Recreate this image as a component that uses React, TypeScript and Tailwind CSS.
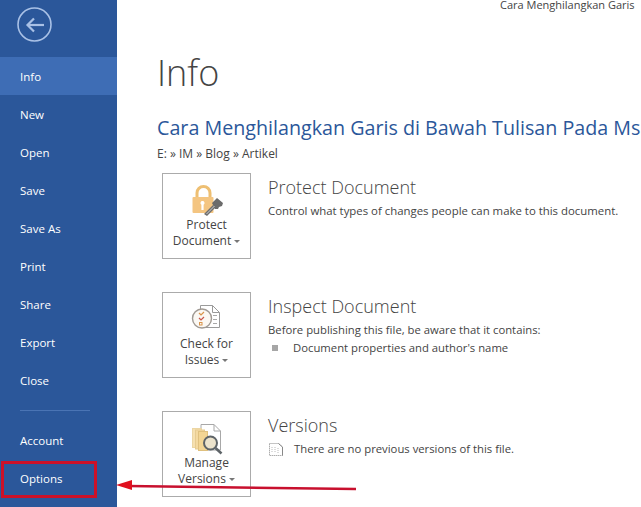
import React from "react";

function Caret() {
  return <span className="inline-block ml-[3px] align-middle w-0 h-0 border-l-[3px] border-r-[3px] border-t-[3px] border-l-transparent border-r-transparent border-t-[#777]" />;
}

function LockIcon() {
  return (
    <svg width="34" height="36" viewBox="0 0 34 36">
      <path d="M7 17v-5a6.5 6.5 0 0 1 13 0v5" fill="none" stroke="#eebf72" strokeWidth="3" />
      <rect x="2.5" y="16" width="21" height="16" rx="1" fill="#f4c581" />
      <path d="M12.5 20a2 2 0 0 1 1.1 3.7V29h-2.2v-5.3a2 2 0 0 1 1.1-3.7z" fill="#fff" />
      <path d="M14 33l9-9 2.5 2.5-8.5 8.5z" fill="#6f6f6f" />
      <path d="M22 22l5-5 6 5-1 3-3 1-1 2-3 0z" fill="#6b6b6b" />
      <path d="M16.5 33l8-8" stroke="#cfcfcf" strokeWidth="1" />
    </svg>
  );
}

function CheckIcon() {
  return (
    <svg width="34" height="34" viewBox="0 0 34 34" fill="none">
      <path d="M10.5 5.5h12l7 7v15h-19z" fill="#fff" stroke="#9a9a9a" />
      <path d="M22.5 5.5v7h7" stroke="#9a9a9a" />
      <path d="M23 15.5h4M23 19.5h4M23 23.5h4" stroke="#a8a8a8" />
      <circle cx="12" cy="18.5" r="9.5" fill="#fbf8f3" stroke="#a09a94" strokeWidth="1.4" />
      <path d="M9 13l2 2 3-3" stroke="#d9944a" strokeWidth="1.2" />
      <path d="M9 18l2 2 3-3" stroke="#c9574a" strokeWidth="1.2" />
      <rect x="9.5" y="22.5" width="2.5" height="2.5" stroke="#d9944a" />
    </svg>
  );
}

function VersionsIcon() {
  return (
    <svg width="34" height="36" viewBox="0 0 34 36" fill="none">
      <path d="M11 5.5h13l6.5 6.5v19H11z" fill="#fff" stroke="#a8a8a8" />
      <path d="M24 5.5V12h6.5" stroke="#a8a8a8" />
      <rect x="2.5" y="9.5" width="9" height="19" fill="#f6e0b0" stroke="#ecd6a4" />
      <rect x="5.5" y="11" width="9" height="19" fill="#f4d9a0" stroke="#e6cb92" />
      <rect x="8.5" y="12.5" width="9" height="19" fill="#f3d594" stroke="#dfc07e" />
      <circle cx="20.5" cy="24" r="6.5" fill="#ece3cc" stroke="#5e6468" strokeWidth="2" />
      <path d="M25.5 29l6 5.5" stroke="#5e6468" strokeWidth="2.6" />
    </svg>
  );
}

function Section({ icon, l1, l2, title, children }: { icon: React.ReactNode; l1: string; l2: string; title: string; children: React.ReactNode }) {
  return (
    <div className="flex h-[86px]">
      <div className="w-[89px] h-[86px] border border-[#ababab] flex flex-col items-center pt-[7px] text-[12px] leading-[16px] text-[#444]">
        <div className="h-[35px] mb-[1px] flex justify-center">{icon}</div>
        <div>{l1}</div>
        <div>{l2}<Caret /></div>
      </div>
      <div className="ml-[17px] pt-[2px]">
        <div className="text-[18px] leading-[25px] mb-[3px] text-[#444] font-light">{title}</div>
        {children}
      </div>
    </div>
  );
}

const items = ["Info", "New", "Open", "Save", "Save As", "Print", "Share", "Export", "Close"];

export default function App() {
  return (
    <div className="relative w-[641px] h-[507px] overflow-hidden bg-white flex font-['Open_Sans','Noto_Sans',sans-serif]">
      <div className="w-[117px] h-full shrink-0 bg-[#2b579a] flex flex-col text-[11.5px] text-white">
        <div className="h-[57px] pl-[17px] pt-[7px]">
          <svg width="36" height="36" viewBox="0 0 36 36" fill="none" stroke="#a9c1e6">
            <circle cx="17.5" cy="17.5" r="16.5" strokeWidth="1.6" />
            <path d="M27 18H11" strokeWidth="2.2" />
            <path d="M17 11.5L10.5 18l6.5 6.5" strokeWidth="2.2" />
          </svg>
        </div>
        {items.map((t, i) => (
          <div key={t} className={`h-[38px] pl-[20px] pt-[2px] flex items-center ${i === 0 ? "bg-[#3e6db5]" : ""}`}>{t}</div>
        ))}
        <div className="ml-[20px] mr-[27px] mt-[11px] mb-[10px] h-px bg-[#4a74b4]" />
        <div className="h-[38px] pl-[20px] pt-[2px] flex items-center">Account</div>
        <div className="h-[38px] pl-[20px] pt-[2px] flex items-center">Options</div>
      </div>

      <div className="flex-1 min-w-0 overflow-hidden relative">
        <div className="h-[11px] pl-[383px] text-[11px] leading-[10px] text-[#444] whitespace-nowrap">Cara Menghilangkan Garis</div>
        <div className="pl-[40px] pt-[37px] text-[36px] leading-[50px] font-light text-[#444]">Info</div>
        <div className="pl-[40px] pt-[17px] text-[19.7px] leading-[26px] text-[#2b579a] whitespace-nowrap">Cara Menghilangkan Garis di Bawah Tulisan Pada Ms</div>
        <div className="pl-[40px] pt-[5px] text-[12px] leading-[16px] text-[#444]">E: » IM » Blog » Artikel</div>
        <div className="pl-[45px] pt-[11px] flex flex-col gap-[33px]">
          <Section icon={<LockIcon />} l1="Protect" l2="Document" title="Protect Document">
            <div className="text-[11.4px] leading-[16px] text-[#444] whitespace-nowrap">Control what types of changes people can make to this document.</div>
          </Section>
          <Section icon={<CheckIcon />} l1="Check for" l2="Issues" title="Inspect Document">
            <div className="text-[11.3px] leading-[16px] text-[#444] whitespace-nowrap">Before publishing this file, be aware that it contains:</div>
            <div className="flex items-center text-[11.3px] leading-[16px] text-[#444] mt-[2px] whitespace-nowrap">
              <span className="ml-[4px] mr-[15px] w-[6px] h-[6px] bg-[#a6a6a6]" />
              Document properties and author's name
            </div>
          </Section>
          <Section icon={<VersionsIcon />} l1="Manage" l2="Versions" title="Versions">
            <div className="flex items-center mt-[1px] text-[11.3px] leading-[16px] text-[#444] whitespace-nowrap">
              <svg className="mr-[10px]" width="16" height="16" viewBox="0 0 16 16" fill="none">
                <path d="M1.5 2.5h9l4 3.5v8.5h-13z" stroke="#8a8a8a" strokeDasharray="1 1" />
                <path d="M10.5 2.5l4 3.5v8.5" stroke="#888" />
                <path d="M4 6v6M7 6v6M10 7v5" stroke="#bbb" strokeDasharray="1 1" />
              </svg>
              There are no previous versions of this file.
            </div>
          </Section>
        </div>
      </div>

      <div className="absolute left-[1px] top-[461px] w-[96px] h-[37px] border-[3px] border-[#cc1128]" />
      <svg className="absolute left-0 top-0 pointer-events-none" width="641" height="507" viewBox="0 0 641 507">
        <path d="M128 486L356 489" stroke="#c8102e" strokeWidth="2.5" fill="none" />
        <path d="M116 485l16-5v10z" fill="#e0101f" />
      </svg>
    </div>
  );
}
